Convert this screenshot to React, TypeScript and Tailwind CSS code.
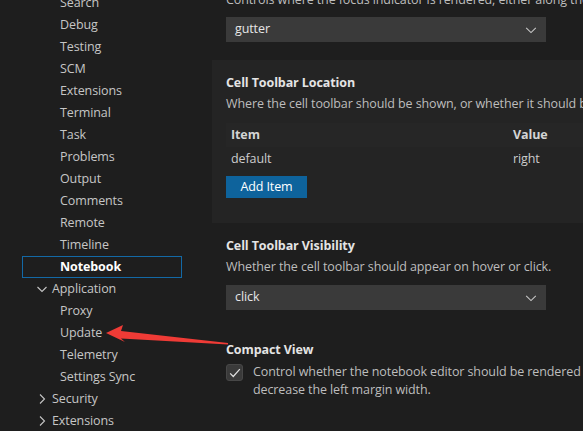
import React from "react";

const font = { fontFamily: '"Segoe UI", "Open Sans", "Noto Sans", sans-serif', letterSpacing: "-0.1px" };

const Chevron = ({ open }: { open: boolean }) => (
  <svg width="16" height="16" viewBox="0 0 16 16" className="shrink-0">
    {open ? (
      <path d="M3.5 6 L8 10.5 L12.5 6" stroke="#c5c5c5" strokeWidth="1.1" fill="none" />
    ) : (
      <path d="M6 3.5 L10.5 8 L6 12.5" stroke="#c5c5c5" strokeWidth="1.1" fill="none" />
    )}
  </svg>
);

const SelectChevron = () => (
  <svg width="14" height="14" viewBox="0 0 16 16">
    <path d="M2.5 5.5 L8 11 L13.5 5.5" stroke="#c8c8c8" strokeWidth="1.2" fill="none" />
  </svg>
);

function Leaf({ label }: { label: string }) {
  return (
    <div className="h-[22px] flex items-center pl-[38px] text-[12.5px] text-[#c6c6c6]">{label}</div>
  );
}

function Group({ label, open }: { label: string; open: boolean }) {
  return (
    <div className="h-[22px] flex items-center pl-[12px] gap-[1px] text-[12.5px] text-[#c6c6c6]">
      <Chevron open={open} />
      <span className="ml-[1px]">{label}</span>
    </div>
  );
}

function Select({ value }: { value: string }) {
  return (
    <div className="w-[320px] h-[25px] bg-[#3a3a3a] flex items-center justify-between pl-[9px] pr-[8px] text-[12.5px] text-[#e6e6e6]">
      <span>{value}</span>
      <SelectChevron />
    </div>
  );
}

export default function App() {
  const before = ["Search", "Debug", "Testing", "SCM", "Extensions", "Terminal", "Task", "Problems", "Output", "Comments", "Remote", "Timeline"];
  return (
    <div style={font} className="relative w-[583px] h-[431px] overflow-hidden bg-[#1e1e1e] flex">
      <div className="w-[212px] shrink-0 pl-[22px]">
        <div className="w-[160px] -mt-[8px] flex flex-col">
          {before.map((l) => (
            <Leaf key={l} label={l} />
          ))}
          <div className="h-[22px] flex items-center pl-[37px] border border-[#1369a6] text-[12.5px] font-bold text-white">
            Notebook
          </div>
          <Group label="Application" open />
          <Leaf label="Proxy" />
          <Leaf label="Update" />
          <Leaf label="Telemetry" />
          <Leaf label="Settings Sync" />
          <Group label="Security" open={false} />
          <Group label="Extensions" open={false} />
        </div>
      </div>

      <div className="flex-1 flex flex-col min-w-0">
        <div className="pl-[14px] -mt-[9px]">
          <div className="h-[18px] leading-[18px] text-[12.5px] text-[#bdbdbd] whitespace-nowrap">
            Controls where the focus indicator is rendered, either along the cell borders or on the left gutter.
          </div>
          <div className="mt-[8px]">
            <Select value="gutter" />
          </div>
        </div>

        <div className="mt-[18px] bg-[#242424] pl-[14px] pt-[14px] pb-[25px]">
          <div className="h-[18px] leading-[18px] text-[12.5px] font-bold text-[#e4e4e4] whitespace-nowrap">
            Cell Toolbar Location
          </div>
          <div className="mt-[3px] h-[18px] leading-[18px] text-[12.5px] text-[#bdbdbd] whitespace-nowrap">
            Where the cell toolbar should be shown, or whether it should be hidden.
          </div>
          <div className="mt-[10px] text-[12.5px]">
            <div className="h-[24px] flex items-center bg-[#262626] font-bold text-[#d4d4d4]">
              <div className="w-[282px] pl-[5px]">Item</div>
              <div className="pl-[5px]">Value</div>
            </div>
            <div className="h-[24px] flex items-center text-[#cccccc]">
              <div className="w-[282px] pl-[5px]">default</div>
              <div className="pl-[5px]">right</div>
            </div>
          </div>
          <button className="mt-[5px] h-[22px] w-[81px] bg-[#0e639c] text-white text-[12.5px] flex items-center justify-center">
            Add Item
          </button>
        </div>

        <div className="pl-[14px] pt-[14px]">
          <div className="h-[18px] leading-[18px] text-[12.5px] font-bold text-[#e4e4e4] whitespace-nowrap">
            Cell Toolbar Visibility
          </div>
          <div className="mt-[3px] h-[18px] leading-[18px] text-[12.5px] text-[#bdbdbd] whitespace-nowrap">
            Whether the cell toolbar should appear on hover or click.
          </div>
          <div className="mt-[9px]">
            <Select value="click" />
          </div>

          <div className="mt-[31px] h-[18px] leading-[18px] text-[12.5px] font-bold text-[#e4e4e4] whitespace-nowrap">
            Compact View
          </div>
          <div className="mt-[5px] flex items-start">
            <div className="w-[17px] h-[17px] bg-[#3a3a3a] border border-[#474747] rounded-[3px] flex items-center justify-center shrink-0">
              <svg width="14" height="14" viewBox="0 0 16 16">
                <path d="M2.5 8.5 L6 12 L13.5 3.5" stroke="#e0e0e0" strokeWidth="1.4" fill="none" />
              </svg>
            </div>
            <div className="ml-[10px] text-[12.5px] leading-[18px] text-[#bdbdbd] -mt-[1px]">
              <div className="whitespace-nowrap">Control whether the notebook editor should be rendered in a compact form. For example, when turned on, it will</div>
              <div className="whitespace-nowrap">decrease the left margin width.</div>
            </div>
          </div>
        </div>
      </div>

      <svg className="absolute left-0 top-0 pointer-events-none" width="583" height="431" viewBox="0 0 583 431">
        <polygon
          points="106,333 123,325 121,331 228,343 228,344.5 121,338.5 125,342"
          fill="#ef3b36"
        />
      </svg>
    </div>
  );
}
